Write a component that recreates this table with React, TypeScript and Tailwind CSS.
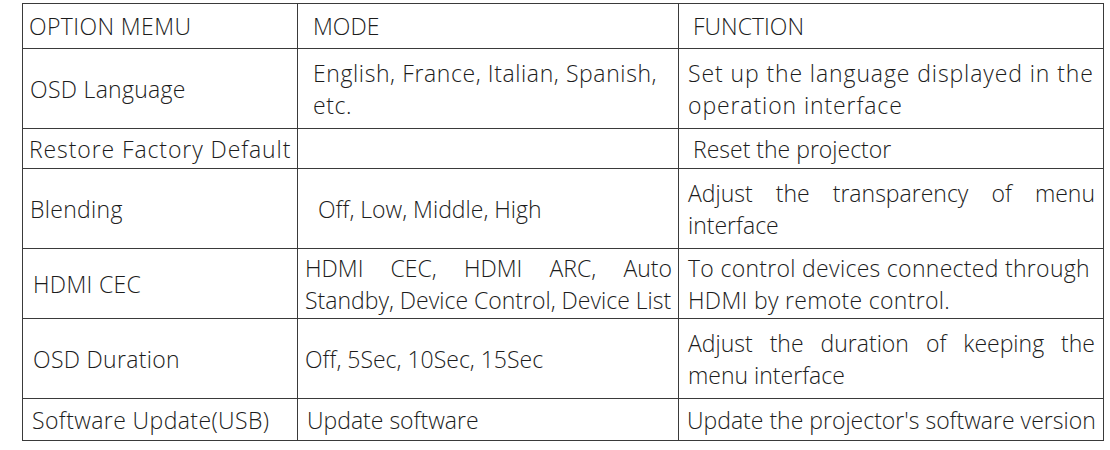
const font = { fontFamily: "'Open Sans', 'Liberation Sans', sans-serif" };

type Cell = {
  lines: string[];
  justify?: boolean;
  pad: string;
  track?: string;
};

type Row = {
  h: string;
  cells: [Cell, Cell, Cell];
};

const rows: Row[] = [
  {
    h: "h-[45px]",
    cells: [
      { lines: ["OPTION MEMU"], pad: "pl-[6px]", track: "tracking-[0.4px]" },
      { lines: ["MODE"], pad: "pl-[15px]" },
      { lines: ["FUNCTION"], pad: "pl-[14px]" },
    ],
  },
  {
    h: "h-[80px]",
    cells: [
      { lines: ["OSD Language"], pad: "pl-[7px]", track: "tracking-[0.3px]" },
      { lines: ["English, France, Italian, Spanish,", "etc."], pad: "pl-[15px]", track: "tracking-[0.6px]" },
      { lines: ["Set up the language displayed in the", "operation interface"], pad: "pl-[9px]", track: "tracking-[0.9px]" },
    ],
  },
  {
    h: "h-[40px]",
    cells: [
      { lines: ["Restore Factory Default"], pad: "pl-[6px]", track: "tracking-[0.9px]" },
      { lines: [""], pad: "pl-[15px]" },
      { lines: ["Reset the projector"], pad: "pl-[14px]" },
    ],
  },
  {
    h: "h-[80px]",
    cells: [
      { lines: ["Blending"], pad: "pl-[7px]", track: "tracking-[0.3px]" },
      { lines: ["Off, Low, Middle, High"], pad: "pl-[20px]" },
      { lines: ["Adjust the transparency of menu", "interface"], justify: true, pad: "pl-[9px] pr-[8px]" },
    ],
  },
  {
    h: "h-[70px]",
    cells: [
      { lines: ["HDMI CEC"], pad: "pl-[10px]", track: "tracking-[0.3px]" },
      { lines: ["HDMI CEC, HDMI ARC, Auto", "Standby, Device Control, Device List"], justify: true, pad: "pl-[7px] pr-[6px]" },
      { lines: ["To control devices connected through", "HDMI by remote control."], pad: "pl-[9px]", track: "tracking-[0.3px]" },
    ],
  },
  {
    h: "h-[80px]",
    cells: [
      { lines: ["OSD Duration"], pad: "pl-[10px]", track: "tracking-[0.3px]" },
      { lines: ["Off, 5Sec, 10Sec, 15Sec"], pad: "pl-[7px]" },
      { lines: ["Adjust the duration of keeping the", "menu interface"], justify: true, pad: "pl-[9px] pr-[8px]" },
    ],
  },
  {
    h: "h-[42px]",
    cells: [
      { lines: ["Software Update(USB)"], pad: "pl-[9px]", track: "tracking-[0.4px]" },
      { lines: ["Update software"], pad: "pl-[9px]" },
      { lines: ["Update the projector's software version"], pad: "pl-[8px]" },
    ],
  },
];

function CellBody({ cell }: { cell: Cell }) {
  return (
    <div className={`${cell.pad} ${cell.track ?? ""} leading-[32px]`}>
      {cell.lines.map((line, i) => (
        <div
          key={i}
          className={
            cell.justify && i < cell.lines.length - 1
              ? "text-justify [text-align-last:justify] whitespace-nowrap"
              : "whitespace-nowrap"
          }
        >
          {line || "\u00a0"}
        </div>
      ))}
    </div>
  );
}

export default function App() {
  return (
    <div className="w-[1110px] h-[450px] bg-white pt-[3px] pl-[22px]" style={font}>
      <table className="table-fixed border-collapse text-[23px] font-light text-[#1c1c1c]">
        <colgroup>
          <col className="w-[275px]" />
          <col className="w-[381px]" />
          <col className="w-[425px]" />
        </colgroup>
        <tbody>
          {rows.map((row, r) => (
            <tr key={r} className={row.h}>
              {row.cells.map((cell, c) => (
                <td key={c} className="border border-[#3a3a3a] p-0 align-middle">
                  <CellBody cell={cell} />
                </td>
              ))}
            </tr>
          ))}
        </tbody>
      </table>
    </div>
  );
}
